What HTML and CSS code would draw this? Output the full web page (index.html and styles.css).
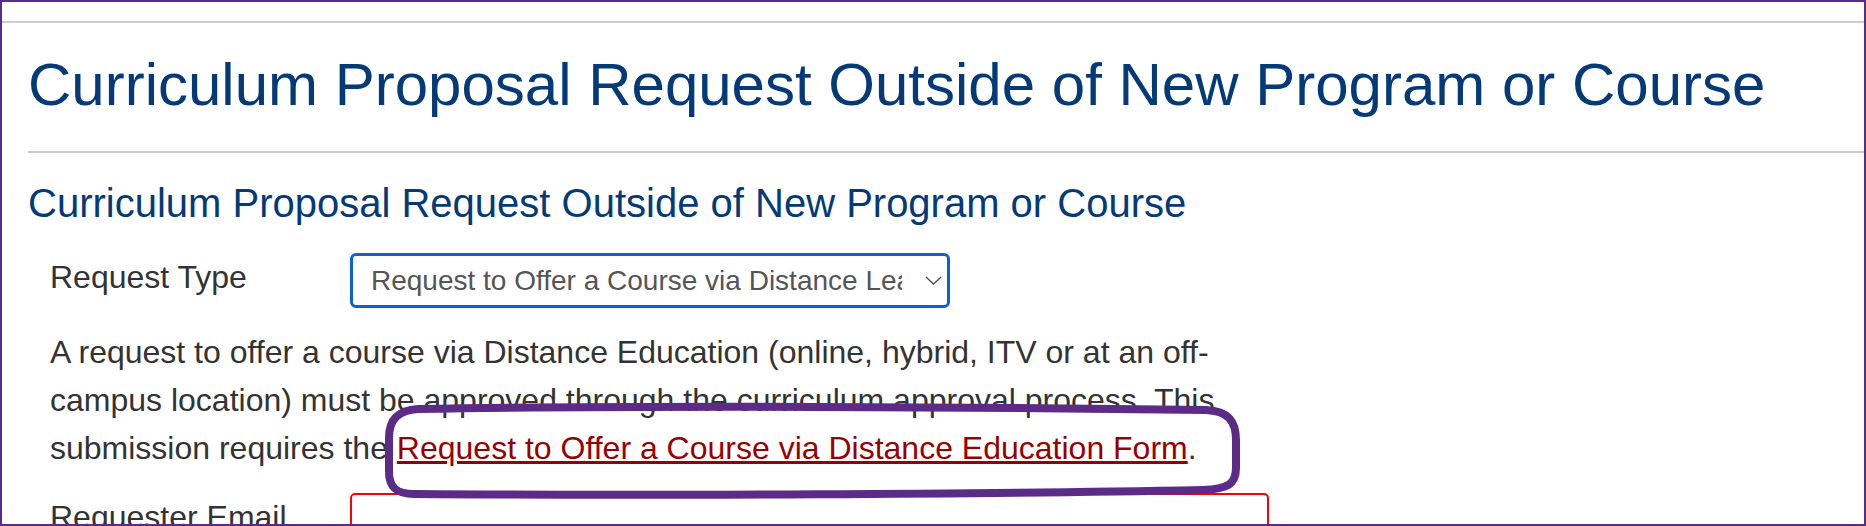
FILE: index.html
```html
<!DOCTYPE html>
<html lang="en">
<head>
<meta charset="utf-8">
<title>Curriculum Proposal Request</title>
<link rel="stylesheet" href="styles.css">
</head>
<body>
<div class="frame">
  <div class="topbar"></div>
  <main class="content">
    <h1 class="page-title">Curriculum Proposal Request Outside of New Program or Course</h1>
    <h2 class="form-title">Curriculum Proposal Request Outside of New Program or Course</h2>
    <form class="form">
      <div class="row">
        <label class="label">Request Type</label>
        <div class="select">
          <span class="select-text">Request to Offer a Course via Distance Learning</span>
          <svg class="chevron" width="17" height="9" viewBox="0 0 17 9"><path d="M1 1 L8.5 8 L16 1" fill="none" stroke="#555" stroke-width="1.4"/></svg>
        </div>
      </div>
      <p class="desc">A request to offer a course via Distance Education (online, hybrid, ITV or at an off-campus location) must be approved through the curriculum approval process. This submission requires the <a class="link" href="#">Request to Offer a Course via Distance Education Form</a>.</p>
      <div class="row">
        <label class="label">Requester Email</label>
        <div class="input input-invalid"></div>
      </div>
    </form>
  </main>
  <svg class="annotation" width="1866" height="526" viewBox="0 0 1866 526">
    <path d="M 418 409 C 640 405, 1000 407, 1206 410 C 1228 411, 1236 421, 1236 440 L 1236 468 C 1236 484, 1228 489, 1203 490 C 1000 494, 640 496, 414 494 C 396 494, 389 487, 389 472 L 389 438 C 389 419, 399 410, 418 409 Z" fill="none" stroke="#5c2a87" stroke-width="8" stroke-linejoin="round"/>
  </svg>
</div>
</body>
</html>
```

FILE: styles.css
```css
* { box-sizing: border-box; }

html, body {
  margin: 0;
  padding: 0;
  background: #fff;
}

body {
  font-family: "Liberation Sans", Arial, Helvetica, sans-serif;
  color: #333;
}

.frame {
  position: relative;
  width: 1866px;
  height: 526px;
  border: 2px solid #5c2a87;
  overflow: hidden;
}

.topbar {
  height: 21px;
  border-bottom: 2px solid #cccccc;
}

.content {
  padding-left: 26px;
}

.page-title {
  margin: 26px 0 0;
  padding-bottom: 30px;
  border-bottom: 2px solid #cccccc;
  font-size: 60px;
  line-height: 72px;
  font-weight: normal;
  color: #043a78;
  white-space: nowrap;
}

.form-title {
  margin: 26px 0 26px;
  font-size: 40px;
  line-height: 48px;
  font-weight: normal;
  color: #043a78;
  white-space: nowrap;
}

.form {
  padding-left: 22px;
  width: 1241px;
}

.row {
  display: flex;
  align-items: flex-start;
}

.label {
  flex: 0 0 300px;
  font-size: 32px;
  line-height: 48px;
  color: #333;
}

.select {
  display: flex;
  align-items: center;
  width: 600px;
  height: 55px;
  border: 3px solid #0b63cf;
  border-radius: 6px;
  padding: 0 5px 0 18px;
  background: #fff;
}

.select-text {
  flex: 0 0 531px;
  overflow: hidden;
  white-space: nowrap;
  font-size: 28px;
  color: #555;
}

.chevron {
  margin-left: auto;
  flex: 0 0 17px;
}

.desc {
  margin: 20px 0 21px;
  font-size: 32px;
  line-height: 48px;
  color: #333;
}

.link {
  color: #990000;
  text-decoration: underline;
}

.input {
  flex: 1;
  height: 54px;
  border: 2px solid #cccccc;
  border-radius: 5px;
}

.input-invalid {
  border-color: #ff0000;
}

.annotation {
  position: absolute;
  left: -2px;
  top: -2px;
  pointer-events: none;
}
```
